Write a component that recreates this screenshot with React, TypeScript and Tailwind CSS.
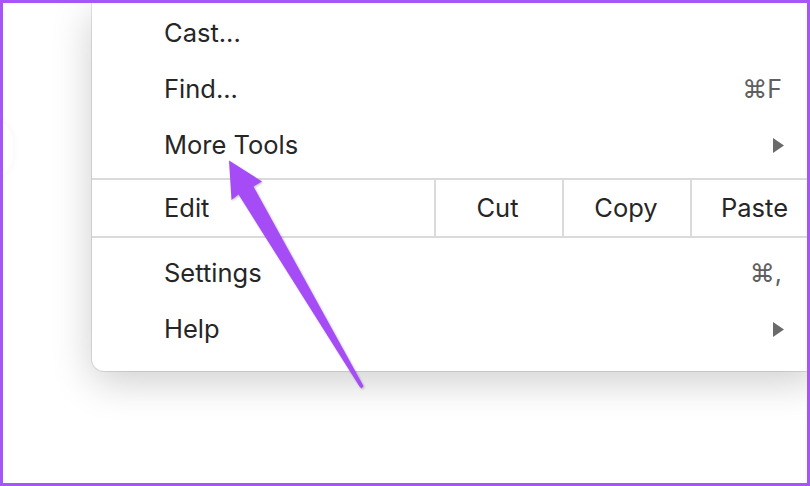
import React from "react";

const Arrow = () => (
  <svg width="11" height="15" viewBox="0 0 11 15" className="block">
    <polygon points="0,0 11,7.5 0,15" fill="#6a6a6a" />
  </svg>
);

const Row = ({ label, right }: { label: string; right?: React.ReactNode }) => (
  <div className="h-[56px] flex items-center justify-between pl-[72px] pr-[37px]">
    <span className="leading-none text-[25.5px] text-[#262626]">{label}</span>
    {right}
  </div>
);

const Shortcut = ({ text }: { text: string }) => (
  <span className="leading-none text-[25px] text-[#5f5f5f]">{text}</span>
);

export default function App() {
  return (
    <div
      className="relative w-[810px] h-[486px] border-[3px] border-[#a855f7] bg-white overflow-hidden"
      style={{ fontFamily: "Inter, 'DejaVu Sans', sans-serif" }}
    >
      <div className="absolute left-[-36px] top-[116px] w-[46px] h-[60px] rounded-full bg-white shadow-[0_0_8px_rgba(0,0,0,0.05)]" />
      <div className="relative ml-[89px] w-[727px] bg-white rounded-bl-[12px] shadow-[0_0_0_1px_rgba(0,0,0,0.1),0_10px_42px_rgba(0,0,0,0.2)]">
        <div className="pt-[2px] pb-[5px]">
          <Row label="Cast..." />
          <Row label="Find..." right={<Shortcut text="⌘F" />} />
          <Row label="More Tools" right={<span className="-mr-[2px]"><Arrow /></span>} />
        </div>
        <div className="h-[2px] bg-[#dadada]" />
        <div className="flex h-[56px]">
          <div className="w-[342px] flex items-center pl-[72px]">
            <span className="leading-none text-[25.5px] text-[#262626]">Edit</span>
          </div>
          <div className="w-[128px] border-l-2 border-[#dadada] flex items-center justify-center">
            <span className="leading-none text-[25.5px] text-[#262626] -ml-[3px]">Cut</span>
          </div>
          <div className="w-[128px] border-l-2 border-[#dadada] flex items-center justify-center">
            <span className="leading-none text-[25.5px] text-[#262626] -ml-[2px]">Copy</span>
          </div>
          <div className="w-[129px] border-l-2 border-[#dadada] flex items-center justify-center">
            <span className="leading-none text-[25.5px] text-[#262626] -ml-[2px]">Paste</span>
          </div>
        </div>
        <div className="h-[2px] bg-[#dadada]" />
        <div className="pt-[7px] pb-[14px]">
          <Row label="Settings" right={<Shortcut text="⌘," />} />
          <Row label="Help" right={<span className="-mr-[2px]"><Arrow /></span>} />
        </div>
      </div>
      <svg
        className="absolute left-[-3px] top-[-3px] pointer-events-none"
        width="810"
        height="486"
        viewBox="0 0 810 486"
        style={{ filter: "drop-shadow(1px 1px 1px rgba(0,0,0,0.25))" }}
      >
        <polygon
          points="229,160.5 262,181.5 253.5,186.5 363.5,386 361.5,388.5 359.5,386.5 238.5,194.5 231.5,200"
          fill="#a64cf6"
        />
      </svg>
    </div>
  );
}
